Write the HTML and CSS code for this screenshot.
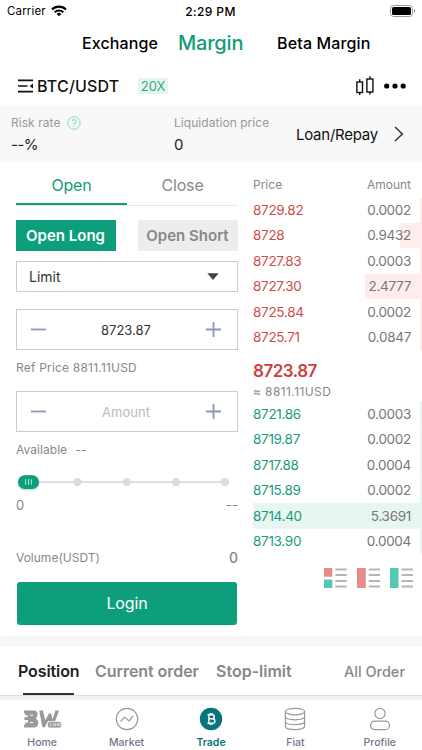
FILE: index.html
```
<!DOCTYPE html>
<html lang="en">
<head>
<meta charset="utf-8">
<title>Margin trade</title>
<link rel="stylesheet" href="styles.css">
</head>
<body>
<div class="app">
  <header class="status">
    <div class="carrier"><span>Carrier</span>
      <svg width="16" height="12" viewBox="0 0 16 12"><g fill="none" stroke="#000" stroke-width="2.1"><path d="M1 4.5a10 10 0 0 1 14 0"/><path d="M3.7 7.3a6.1 6.1 0 0 1 8.6 0"/></g><path d="M8 11.3 5.6 9a3.4 3.4 0 0 1 4.8 0z"/></svg>
    </div>
    <div class="clock">2:29 PM</div>
    <svg class="battery" width="26" height="12" viewBox="0 0 26 12"><rect x=".5" y=".5" width="22" height="11" rx="3" fill="none" stroke="#999"/><rect x="2" y="2" width="19" height="8" rx="1.6"/><path d="M24 4.2v3.6q1.2-.5 1.2-1.8T24 4.2z" fill="#888"/></svg>
  </header>

  <nav class="modes"><span class="m1">Exchange</span><span class="m2">Margin</span><span class="m3">Beta Margin</span></nav>

  <div class="pair">
    <svg width="16" height="14" viewBox="0 0 16 14"><path d="M0 1.4h15M0 7h9.5M0 12.6h15" stroke="#111" stroke-width="1.7"/><path d="M15 4.6v4.8L11.7 7z" fill="#111"/></svg>
    <span class="symbol">BTC/USDT</span><span class="lev">20X</span>
    <svg class="candles" width="18" height="20" viewBox="0 0 18 20"><g fill="none" stroke="#111" stroke-width="1.4"><rect x=".9" y="6" width="5.6" height="10.5"/><path d="M3.7 3.2V6M3.7 16.5v2.6"/><rect x="10.9" y="3" width="6" height="13"/><path d="M13.9.3V3M13.9 16v2.4"/></g></svg>
    <svg width="22" height="6" viewBox="0 0 22 6"><circle cx="2.7" cy="3" r="2.6"/><circle cx="11" cy="3" r="2.6"/><circle cx="19.2" cy="3" r="2.6"/></svg>
  </div>

  <section class="risk">
    <div class="stat rate"><div class="label"><span>Risk rate</span><svg width="14" height="14" viewBox="0 0 14 14" fill="none" stroke="#86dcc6"><circle cx="7" cy="7" r="6.2"/><path d="M5.1 5.6c0-2.6 3.900-2.500 3.900-.2 0 1.400-2 1.400-2 3.100M7 9.600v1.100" stroke-width="1.100"/></svg></div><div class="value">--%</div></div>
    <div class="stat liq"><div class="label"><span>Liquidation price</span></div><div class="value">0</div></div>
    <div class="loan">Loan/Repay</div>
    <svg width="10" height="16" viewBox="0 0 10 16"><path d="m1 1 7.300 7L1 15" fill="none" stroke="#333" stroke-width="1.500"/></svg>
  </section>

  <main class="trade">
    <section class="form">
      <div class="tabs"><span class="on">Open</span><span>Close</span></div>
      <div class="sides"><button class="long"><span>Open Long</span></button><button class="short"><span>Open Short</span></button></div>
      <div class="select"><span>Limit</span><svg width="12" height="7" viewBox="0 0 12 7"><path d="M.3.200h11.400L6 6.900z" fill="#444"/></svg></div>
      <div class="stepper price">
        <svg width="15" height="15" viewBox="0 0 15 15"><path d="M0 7.500h15" stroke="#8e96b8" stroke-width="1.800"/></svg>
        <span>8723.87</span>
        <svg width="15" height="15" viewBox="0 0 15 15"><path d="M0 7.500h15M7.500 0v15" stroke="#8e96b8" stroke-width="1.800"/></svg>
      </div>
      <div class="note ref">Ref Price 8811.11USD</div>
      <div class="stepper amount">
        <svg width="15" height="15" viewBox="0 0 15 15"><path d="M0 7.500h15" stroke="#8e96b8" stroke-width="1.800"/></svg>
        <span>Amount</span>
        <svg width="15" height="15" viewBox="0 0 15 15"><path d="M0 7.500h15M7.500 0v15" stroke="#8e96b8" stroke-width="1.800"/></svg>
      </div>
      <div class="note avail"><span>Available</span><span>--</span></div>
      <svg class="slider" width="222" height="20" viewBox="0 0 222 20"><path d="M12 10h197" stroke="#dedede" stroke-width="2"/><g fill="#dcdcdc"><circle cx="61.5" cy="10" r="4"/><circle cx="110.7" cy="10" r="4"/><circle cx="160" cy="10" r="4"/><circle cx="209" cy="10" r="4"/></g><rect x="1.5" y="3" width="22" height="15.5" rx="7.7" fill="#0d9f7b" opacity=".25"/><rect x="2" y="3.2" width="21" height="13.8" rx="6.9" fill="#0d9f7b"/><path d="M9.600 7.200v5.600M12.500 7.200v5.600M15.400 7.200v5.600" stroke="#b9e6da"/></svg>
      <div class="range"><span>0</span><span>--</span></div>
      <div class="volume"><span>Volume(USDT)</span><b>0</b></div>
      <button class="login">Login</button>
    </section>

    <section class="book">
      <div class="head"><span>Price</span><span>Amount</span></div>
      <div class="asks">
        <div class="row"><b>8729.82</b><span>0.0002</span></div>
        <div class="row mid"><b>8728</b><span>0.9432</span></div>
        <div class="row"><b>8727.83</b><span>0.0003</span></div>
        <div class="row big"><b>8727.30</b><span>2.4777</span></div>
        <div class="row"><b>8725.84</b><span>0.0002</span></div>
        <div class="row"><b>8725.71</b><span>0.0847</span></div>
      </div>
      <div class="last"><strong>8723.87</strong><span>≈ 8811.11USD</span></div>
      <div class="bids">
        <div class="row"><b>8721.86</b><span>0.0003</span></div>
        <div class="row"><b>8719.87</b><span>0.0002</span></div>
        <div class="row"><b>8717.88</b><span>0.0004</span></div>
        <div class="row"><b>8715.89</b><span>0.0002</span></div>
        <div class="row full"><b>8714.40</b><span>5.3691</span></div>
        <div class="row"><b>8713.90</b><span>0.0004</span></div>
      </div>
      <div class="views">
        <svg width="23" height="20" viewBox="0 0 23 20"><path d="M0 0h8.300v8.800H0z" fill="#e88c8b"/><path d="M0 11.500h8.300V20H0z" fill="#54c8b1"/><path d="M11.300 1.500h11.500M11.300 7h11.500M11.300 13h11.500M11.300 18.500h11.500" stroke="#b5b5b5" stroke-width="2"/></svg>
        <svg width="23" height="20" viewBox="0 0 23 20"><path d="M0 0h8.800v20H0z" fill="#e88c8b"/><path d="M11.700 1.500H23M11.700 7H23M11.700 13H23M11.700 18.500H23" stroke="#b5b5b5" stroke-width="2"/></svg>
        <svg width="23" height="20" viewBox="0 0 23 20"><path d="M0 0h8.500v20H0z" fill="#54c8b1"/><path d="M11.500 1.500H23M11.500 7H23M11.500 13H23M11.500 18.500H23" stroke="#b5b5b5" stroke-width="2"/></svg>
      </div>
    </section>
  </main>

  <section class="orders"><span class="current">Position</span><span class="o2">Current order</span><span class="o3">Stop-limit</span><span class="all">All Order</span></section>

  <footer class="tabbar">
    <div class="item"><svg width="40" height="24" viewBox="0 0 40 24"><path d="M2 3.500h9.800q3.700 0 3.700 3.800 0 3-1.600 4.200 2.400 1.200 2.400 4.200 0 4.800-4.600 4.800H2v-3h1.300v-2.100H6v-2.300H2.500v-3H6V8.400H3.300V6.600H2z" fill="#999"/><path d="M8 8.200h3M8 15.500h3" stroke="#fff" stroke-width="1"/><path d="M17.200 3.500H21l2.200 9.800 3.800-6.800h2.200l1.300 6 2.800-9h3.800l-4.600 12.500-2.600 4h-1.900l-1.500-6.500-3.800 6.700h-2.300z" fill="#999"/><rect x="25.500" y="14.500" width="14" height="6.500" rx="2.200" fill="#999" stroke="#fff" stroke-width=".8"/><g fill="none" stroke="#eee" stroke-width=".7"><path d="M30 16.700h-2v2h2M31.500 16.700h2v2h-2zM35 19v-2.300h3V19M36.500 16.700V19"/></g></svg><span>Home</span></div>
    <div class="item"><svg width="24" height="24" viewBox="0 0 24 24" fill="none" stroke="#999" stroke-width="1.200"><circle cx="12" cy="12" r="10.700"/><path d="m5.500 14.500 4.200-4.300 4.500 3.700 4-5.200"/></svg><span>Market</span></div>
    <div class="item active"><svg width="24" height="24" viewBox="0 0 24 24"><circle cx="12" cy="12" r="11.200" fill="#08747c"/><path d="M8.500 7.800h4.700q2.100 0 2.100 2t-2.100 2h-3.400 3.900q2.200 0 2.200 2.200t-2.200 2.200H8.500M9.900 7.800v8.400M11.200 6v1.800M13.200 6v1.800M11.200 16.200V18M13.200 16.200V18" fill="none" stroke="#fff" stroke-width="1.400"/></svg><span>Trade</span></div>
    <div class="item"><svg width="24" height="24" viewBox="0 0 24 24" fill="none" stroke="#999" stroke-width="1.200"><ellipse cx="12" cy="4.600" rx="9.600" ry="3.300"/><path d="M2.400 4.600v14.600c0 4.500 19.200 4.500 19.200 0V4.600M2.400 9.600c0 4.300 19.200 4.300 19.200 0M2.400 14.500c0 4.300 19.200 4.300 19.200 0"/></svg><span>Fiat</span></div>
    <div class="item"><svg width="24" height="24" viewBox="0 0 24 24" fill="none" stroke="#999" stroke-width="1.200"><circle cx="12" cy="6.500" r="5.100"/><rect x="2.500" y="14.200" width="19" height="8.400" rx="4.200"/></svg><span>Profile</span></div>
  </footer>
</div>
</body>
</html>
```
FILE: styles.css
```
* { box-sizing: border-box; }
body { margin: 0; background: #fff; font-family: Inter, "Liberation Sans", sans-serif; color: #111; }
svg { display: block; flex: none; }
span, b, strong, button { white-space: nowrap; }
button { border: 0; padding: 0; font-family: inherit; }
.app { width: 422px; height: 750px; overflow: hidden; display: flex; flex-direction: column; }

.status { height: 22px; display: grid; grid-template-columns: 1fr auto 1fr; align-items: center; padding: 0 6px 0 7px; font-size: 11.5px; color: #000; }
.carrier { display: flex; align-items: center; gap: 5px; letter-spacing: .15px; }
.carrier span { width: 39px; }
.clock { font-weight: 500; font-size: 12px; letter-spacing: .4px; margin-right: 2px; }
.battery { justify-self: end; }

.modes { height: 42px; display: flex; align-items: center; padding-left: 82px; font-weight: 500; font-size: 16px; color: #000; }
.m1 { width: 96px; letter-spacing: .1px; }
.m3 { letter-spacing: .15px; }
.m2 { width: 99px; font-size: 20px; font-weight: 500; color: #159b7a; letter-spacing: -.2px; }

.pair { height: 42px; display: flex; align-items: center; padding: 2px 16px 0 18px; }
.symbol { font-size: 16px; font-weight: 500; margin-left: 3px; width: 101px; letter-spacing: .2px; }
.lev { width: 30px; height: 16px; line-height: 16px; text-align: center; background: #e5f6f1; color: #36aa8b; font-size: 13px; }
.candles { margin: 0 10px 0 auto; }

.risk { height: 56px; background: #f8f8f8; display: flex; align-items: center; padding-left: 11px; }
.stat { height: 46px; }
.rate { width: 163px; }
.liq { width: 122px; }
.label { display: flex; align-items: center; gap: 7px; height: 23px; font-size: 12px; color: #999; letter-spacing: .05px; }
.value { font-size: 15px; line-height: 20px; color: #222; letter-spacing: -.5px; padding-top: 1px; }
.loan { width: 98px; font-size: 15px; color: #111; letter-spacing: -.25px; }

.trade { height: 474px; display: flex; }
.form { width: 238px; padding-left: 16px; }
.tabs { height: 44px; display: grid; grid-template-columns: 1fr 1fr; border-bottom: 1px solid #e6e6e6; }
.tabs span { display: flex; align-items: center; justify-content: center; padding-top: 4px; font-size: 16px; color: #888; letter-spacing: -.15px; }
.tabs span + span { padding-bottom: 1px; }
.tabs .on { color: #159b7a; border-bottom: 2px solid #159b7a; }
.sides { display: flex; justify-content: space-between; margin-top: 14px; }
.sides button { width: 100px; height: 31px; font-size: 15px; font-weight: 600; padding-right: 1px; }
.long { background: #0d9f7b; color: #fff; }
.short { background: #ededed; color: #888; }
.select, .stepper { border: 1px solid #ccc; display: flex; align-items: center; justify-content: space-between; }
.select { height: 31px; margin-top: 10px; padding: 0 18px 1px 12px; font-size: 14px; color: #333; }
.stepper { height: 41px; padding: 0 16px 0 14px; font-size: 13px; color: #333; }
.price { margin-top: 17px; }
.amount span { color: #bbb; }
.note { font-size: 12px; color: #888; display: flex; align-items: center; letter-spacing: .2px; }
.ref { height: 37px; margin-bottom: 4px; padding-bottom: 2px; }
.avail { height: 36px; gap: 8px; padding-bottom: 2px; letter-spacing: .05px; }
.slider { margin-top: 4px; }
.range { height: 26px; display: flex; justify-content: space-between; align-items: center; font-size: 13px; color: #888; }
.volume { height: 30px; margin-top: 25px; padding-bottom: 2px; display: flex; justify-content: space-between; align-items: center; font-size: 12px; color: #888; }
.volume b { font-size: 14px; font-weight: 500; }
.login { display: block; width: 220px; height: 43px; margin: 9px 0 0 1px; padding-bottom: 2px; border-radius: 3px; background: #0d9f7b; color: #fff; font-size: 16px; letter-spacing: -.15px; }

.book { width: 169px; margin-left: 15px; }
.head { height: 35px; padding: 9px 11px 0 0; display: flex; justify-content: space-between; align-items: center; font-size: 12px; color: #888; }
.row { height: 25.5px; padding-right: 11px; display: flex; justify-content: space-between; align-items: center; font-size: 13.5px; color: #777; letter-spacing: -.3px; }
.row b { font-weight: 400; }
.asks b { color: #cf4c4b; }
.bids b { color: #189c7a; }
.asks .row { background: linear-gradient(#ffecec, #ffecec) right / 2px 100% no-repeat; }
.asks .mid { background-size: 22px 100%; }
.asks .big { background-size: 57px 100%; }
.bids .row { background: linear-gradient(#e8f6f2, #e8f6f2) right / 2px 100% no-repeat; }
.bids .full { background-size: 100% 100%; }
.last { height: 51px; padding-top: 11px; display: flex; flex-direction: column; color: #888; font-size: 12px; }
.last strong { color: #cb3f40; font-size: 17px; line-height: 21px; font-weight: 600; letter-spacing: -.5px; }
.last span { line-height: 20px; letter-spacing: .4px; }
.views { display: flex; gap: 10px; padding: 14px 0 0 71px; }

.orders { height: 64px; border-top: 10px solid #f5f5fa; border-bottom: 4px solid #f2f2f5; display: flex; font-size: 16px; font-weight: 600; color: #888; padding-left: 18px; line-height: 51px; box-shadow: inset 0 -1px #dcdce0; }
.orders .current { color: #222; width: 77px; background: linear-gradient(#333, #333) 5px 47px / 51px 2px no-repeat; letter-spacing: -.1px; }
.o2 { width: 121px; letter-spacing: -.05px; }
.o3 { width: 128px; }
.orders .all { font-size: 14.5px; font-weight: 500; }

.tabbar { height: 50px; display: grid; grid-template-columns: repeat(5, 1fr); }
.item { display: flex; flex-direction: column; align-items: center; padding-top: 7px; font-size: 10.5px; font-weight: 500; color: #77738d; }
.item span { line-height: 13px; margin-top: 5px; }
.active { color: #08747c; font-weight: 600; }
```
